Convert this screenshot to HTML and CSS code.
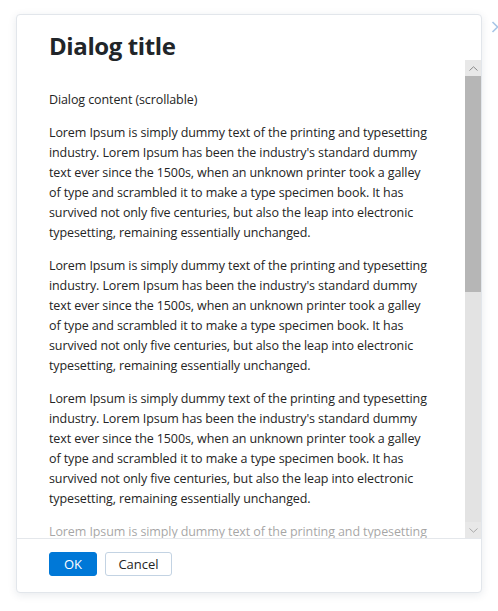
FILE: index.html
```html
<!DOCTYPE html>
<html lang="en">
<head>
<meta charset="utf-8">
<title>Dialog</title>
<link rel="stylesheet" href="styles.css">
</head>
<body>
<svg class="edge-chevron" width="8" height="12" viewBox="0 0 8 12"><path d="M1.5 1 L6.5 6 L1.5 11" fill="none" stroke="#a9c6e6" stroke-width="1.6"/></svg>
<div class="dialog">
  <div class="dialog-header"><h1 class="dialog-title">Dialog title</h1></div>
  <div class="dialog-body">
    <div class="scroll-content">
      <p>Dialog content (scrollable)</p>
      <p>Lorem Ipsum is simply dummy text of the printing and typesetting<br>industry. Lorem Ipsum has been the industry's standard dummy<br>text ever since the 1500s, when an unknown printer took a galley<br>of type and scrambled it to make a type specimen book. It has<br>survived not only five centuries, but also the leap into electronic<br>typesetting, remaining essentially unchanged.</p>
      <p>Lorem Ipsum is simply dummy text of the printing and typesetting<br>industry. Lorem Ipsum has been the industry's standard dummy<br>text ever since the 1500s, when an unknown printer took a galley<br>of type and scrambled it to make a type specimen book. It has<br>survived not only five centuries, but also the leap into electronic<br>typesetting, remaining essentially unchanged.</p>
      <p>Lorem Ipsum is simply dummy text of the printing and typesetting<br>industry. Lorem Ipsum has been the industry's standard dummy<br>text ever since the 1500s, when an unknown printer took a galley<br>of type and scrambled it to make a type specimen book. It has<br>survived not only five centuries, but also the leap into electronic<br>typesetting, remaining essentially unchanged.</p>
      <p class="last">Lorem Ipsum is simply dummy text of the printing and typesetting</p>
      <div class="fade"></div>
    </div>
    <div class="scrollbar">
      <div class="sb-btn"><svg width="9" height="5" viewBox="0 0 9 5"><path d="M0.5 4.5 L4.5 0.8 L8.5 4.5" fill="none" stroke="#8a8a8a" stroke-width="1"/></svg></div>
      <div class="sb-track"><div class="sb-thumb"></div></div>
      <div class="sb-btn"><svg width="9" height="5" viewBox="0 0 9 5"><path d="M0.5 0.5 L4.5 4.2 L8.5 0.5" fill="none" stroke="#a8a8a8" stroke-width="1"/></svg></div>
    </div>
  </div>
  <div class="dialog-footer">
    <button class="btn btn-primary">OK</button>
    <button class="btn btn-secondary">Cancel</button>
  </div>
</div>
</body>
</html>
```
FILE: styles.css
```css
html, body {
  margin: 0;
  padding: 0;
  background: #ffffff;
}
body {
  width: 498px;
  height: 611px;
  overflow: hidden;
  position: relative;
  font-family: "Open Sans", "Noto Sans", sans-serif;
  color: #242424;
  padding-top: 14px;
  padding-left: 16px;
  box-sizing: border-box;
}
.edge-chevron {
  position: absolute;
  left: 491px;
  top: 21px;
}
.dialog {
  width: 466px;
  height: 579px;
  box-sizing: border-box;
  border: 1px solid #e2e6eb;
  border-radius: 4px;
  background: #fff;
  box-shadow: 0 2px 8px rgba(30, 50, 80, 0.10);
  display: flex;
  flex-direction: column;
}
.dialog-header {
  height: 45px;
  padding: 17px 32px 0;
  box-sizing: border-box;
  flex: none;
}
.dialog-title {
  margin: 0;
  font-size: 24px;
  line-height: 28px;
  font-weight: 700;
  color: #212529;
  letter-spacing: -0.4px;
}
.dialog-body {
  height: 478px;
  flex: none;
  display: flex;
  overflow: hidden;
}
.scroll-content {
  flex: 1;
  padding: 17px 0 0 32px;
  overflow: hidden;
  position: relative;
  font-size: 12.5px;
  line-height: 20px;
  letter-spacing: -0.1px;
  white-space: nowrap;
}
.scroll-content p {
  margin: 13px 0;
}
.fade {
  position: absolute;
  left: 0;
  right: 0;
  bottom: 0;
  height: 30px;
  background: linear-gradient(rgba(255,255,255,0.55), rgba(255,255,255,0.6));
}
.scrollbar {
  width: 16px;
  flex: none;
  display: flex;
  flex-direction: column;
  background: #e8e8e8;
}
.sb-btn {
  height: 16px;
  flex: none;
  display: flex;
  align-items: center;
  justify-content: center;
}
.sb-track {
  flex: 1;
  background: #e3e3e3;
}
.sb-thumb {
  height: 216px;
  background: #b6b6b6;
}
.dialog-footer {
  flex: 1;
  border-top: 1px solid #e4e7eb;
  padding: 13px 32px 0;
  display: flex;
  gap: 8px;
  align-items: flex-start;
}
.btn {
  height: 24px;
  box-sizing: border-box;
  border-radius: 3px;
  font-family: "Open Sans", "Noto Sans", sans-serif;
  font-size: 13px;
  line-height: 20px;
  padding: 0;
  cursor: pointer;
}
.btn-primary {
  width: 48px;
  background: #0078d7;
  border: 1px solid #0078d7;
  color: #fff;
}
.btn-secondary {
  width: 67px;
  background: #fff;
  border: 1px solid #c3d3e3;
  color: #242424;
}
```
